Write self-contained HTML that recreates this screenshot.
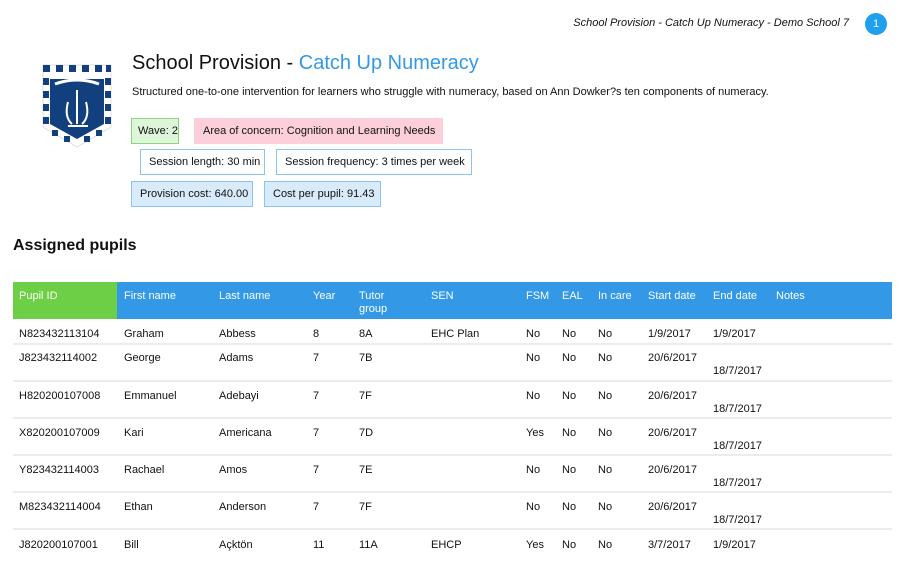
<!DOCTYPE html>
<html><head><style>
body{margin:0;width:902px;height:568px;background:#fff;font-family:"Liberation Sans",sans-serif;color:#111;position:relative;overflow:hidden;font-size:11px}
.a{position:absolute;white-space:nowrap}
.b{position:absolute;height:26px;line-height:24px;padding:0 8px;box-sizing:border-box;font-size:11px;border:1px solid;white-space:nowrap;overflow:hidden}
.hd{position:absolute;top:282px;height:37px;left:13px;width:879px;background:#3399e6}
.hd span{position:absolute;top:8px;color:#fff;line-height:13px;font-size:11px}
.r{position:absolute;left:13px;width:879px;border-bottom:2px solid #ececec}
.r span{position:absolute;font-size:11px;margin-top:2px}
</style></head><body>
<div class="a" style="right:53px;top:17px;font-style:italic;font-size:11px">School Provision - Catch Up Numeracy - Demo School 7</div>
<div class="a" style="left:865px;top:13px;width:22px;height:22px;border-radius:50%;background:#1ea0ee;color:#fff;text-align:center;line-height:22px;font-size:11px">1</div>
<svg class="a" style="left:40px;top:62px" width="74" height="88" viewBox="0 0 74 88">
<path d="M3 3H71V65L37 85L3 65Z" fill="#fff" stroke="#ddd"/>
<g fill="#123f7e">
<rect x="3" y="3" width="7" height="7"/><rect x="16" y="3" width="7" height="7"/><rect x="29" y="3" width="7" height="7"/><rect x="42" y="3" width="7" height="7"/><rect x="55" y="3" width="7" height="7"/><rect x="66" y="3" width="5" height="7"/>
<rect x="3" y="16" width="6" height="7"/><rect x="3" y="29" width="6" height="7"/><rect x="3" y="42" width="6" height="7"/><rect x="3" y="55" width="6" height="7"/>
<rect x="65" y="16" width="6" height="7"/><rect x="65" y="29" width="6" height="7"/><rect x="65" y="42" width="6" height="7"/><rect x="65" y="55" width="6" height="7"/>
<rect x="12" y="68" width="6" height="6"/><rect x="24" y="74" width="6" height="6"/><rect x="44" y="74" width="6" height="6"/><rect x="56" y="68" width="6" height="6"/>
<path d="M10 17H64V62L37 77L10 62Z"/>
</g>
<path d="M15 22Q37 14 59 22" stroke="#fff" stroke-width="3" fill="none"/>
<path d="M37 28V62M28 40Q24 55 32 62M46 40Q50 55 42 62M28 64H48" stroke="#fff" stroke-width="2" fill="none"/>
</svg>
<div class="a" style="left:132px;top:52px;font-size:20px">School Provision - <span style="color:#3399e6">Catch Up Numeracy</span></div>
<div class="a" style="left:132px;top:86px;font-size:11px">Structured one-to-one intervention for learners who struggle with numeracy, based on Ann Dowker?s ten components of numeracy.</div>
<div class="b" style="left:131px;top:118px;width:48px;padding:0 6px;background:#ddf5d8;border-color:#8ed47f">Wave: 2</div>
<div class="b" style="left:194px;top:118px;width:249px;background:#fccfda;border-color:#fccfda">Area of concern: Cognition and Learning Needs</div>
<div class="b" style="left:140px;top:149px;width:125px;background:#fff;border-color:#8cc4ee">Session length: 30 min</div>
<div class="b" style="left:276px;top:149px;width:196px;background:#fff;border-color:#8cc4ee">Session frequency: 3 times per week</div>
<div class="b" style="left:131px;top:181px;width:122px;background:#d8ebfb;border-color:#8cc4ee">Provision cost: 640.00</div>
<div class="b" style="left:264px;top:181px;width:117px;background:#d8ebfb;border-color:#8cc4ee">Cost per pupil: 91.43</div>
<div class="a" style="left:13px;top:237px;font-size:16px;font-weight:bold">Assigned pupils</div>
<div class="hd"><div class="a" style="left:0;top:0;width:104px;height:37px;background:#6ccf45"></div>
<span style="left:6px">Pupil ID</span><span style="left:111px">First name</span><span style="left:206px">Last name</span><span style="left:300px">Year</span><span style="left:346px">Tutor<br>group</span><span style="left:418px">SEN</span><span style="left:513px">FSM</span><span style="left:549px">EAL</span><span style="left:585px">In care</span><span style="left:635px">Start date</span><span style="left:700px">End date</span><span style="left:763px">Notes</span></div>
<div class="r" style="top:319px;height:24px"><span style="left:6px;top:7px">N823432113104</span><span style="left:111px;top:7px">Graham</span><span style="left:206px;top:7px">Abbess</span><span style="left:300px;top:7px">8</span><span style="left:346px;top:7px">8A</span><span style="left:418px;top:7px">EHC Plan</span><span style="left:513px;top:7px">No</span><span style="left:549px;top:7px">No</span><span style="left:585px;top:7px">No</span><span style="left:635px;top:7px">1/9/2017</span><span style="left:700px;top:7px">1/9/2017</span></div>
<div class="r" style="top:345px;height:35px"><span style="left:6px;top:5px">J823432114002</span><span style="left:111px;top:5px">George</span><span style="left:206px;top:5px">Adams</span><span style="left:300px;top:5px">7</span><span style="left:346px;top:5px">7B</span><span style="left:513px;top:5px">No</span><span style="left:549px;top:5px">No</span><span style="left:585px;top:5px">No</span><span style="left:635px;top:5px">20/6/2017</span><span style="left:700px;top:18px">18/7/2017</span></div>
<div class="r" style="top:382px;height:35px"><span style="left:6px;top:6px">H820200107008</span><span style="left:111px;top:6px">Emmanuel</span><span style="left:206px;top:6px">Adebayi</span><span style="left:300px;top:6px">7</span><span style="left:346px;top:6px">7F</span><span style="left:513px;top:6px">No</span><span style="left:549px;top:6px">No</span><span style="left:585px;top:6px">No</span><span style="left:635px;top:6px">20/6/2017</span><span style="left:700px;top:19px">18/7/2017</span></div>
<div class="r" style="top:419px;height:35px"><span style="left:6px;top:6px">X820200107009</span><span style="left:111px;top:6px">Kari</span><span style="left:206px;top:6px">Americana</span><span style="left:300px;top:6px">7</span><span style="left:346px;top:6px">7D</span><span style="left:513px;top:6px">Yes</span><span style="left:549px;top:6px">No</span><span style="left:585px;top:6px">No</span><span style="left:635px;top:6px">20/6/2017</span><span style="left:700px;top:19px">18/7/2017</span></div>
<div class="r" style="top:456px;height:35px"><span style="left:6px;top:6px">Y823432114003</span><span style="left:111px;top:6px">Rachael</span><span style="left:206px;top:6px">Amos</span><span style="left:300px;top:6px">7</span><span style="left:346px;top:6px">7E</span><span style="left:513px;top:6px">No</span><span style="left:549px;top:6px">No</span><span style="left:585px;top:6px">No</span><span style="left:635px;top:6px">20/6/2017</span><span style="left:700px;top:19px">18/7/2017</span></div>
<div class="r" style="top:493px;height:35px"><span style="left:6px;top:6px">M823432114004</span><span style="left:111px;top:6px">Ethan</span><span style="left:206px;top:6px">Anderson</span><span style="left:300px;top:6px">7</span><span style="left:346px;top:6px">7F</span><span style="left:513px;top:6px">No</span><span style="left:549px;top:6px">No</span><span style="left:585px;top:6px">No</span><span style="left:635px;top:6px">20/6/2017</span><span style="left:700px;top:19px">18/7/2017</span></div>
<div class="r" style="top:530px;height:35px;border:0"><span style="left:6px;top:7px">J820200107001</span><span style="left:111px;top:7px">Bill</span><span style="left:206px;top:7px">Açktön</span><span style="left:300px;top:7px">11</span><span style="left:346px;top:7px">11A</span><span style="left:418px;top:7px">EHCP</span><span style="left:513px;top:7px">Yes</span><span style="left:549px;top:7px">No</span><span style="left:585px;top:7px">No</span><span style="left:635px;top:7px">3/7/2017</span><span style="left:700px;top:7px">1/9/2017</span></div>
</body></html>
